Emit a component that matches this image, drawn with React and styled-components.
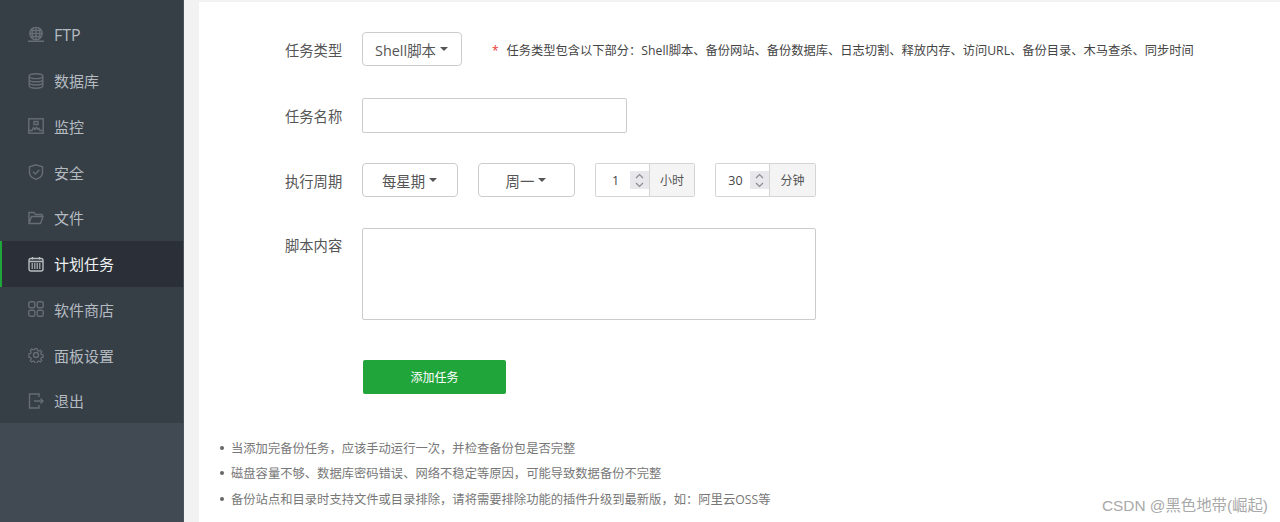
import React from 'react';
import styled, { createGlobalStyle } from 'styled-components';

const cjk = `"Open Sans", "Noto Sans CJK SC", sans-serif`;

const GlobalStyle = createGlobalStyle`
  html, body {
    margin: 0;
    padding: 0;
    height: 100%;
    overflow: hidden;
    background-color: #f2f2f2;
    font-family: ${cjk};
  }
  * {
    box-sizing: border-box;
  }
`;

const Page = styled.div`
  display: flex;
  height: 522px;
  width: 1280px;
  position: relative;
  overflow: hidden;
`;

const Sidebar = styled.nav`
  width: 184px;
  flex-shrink: 0;
  background-color: #414a52;
  border-right: 1px solid #4a535b;
`;

const Menu = styled.ul`
  list-style: none;
  margin: 0;
  padding: 12px 0 0 0;
  height: 423px;
  background-color: #363e46;
`;

const MenuItem = styled.li`
  display: flex;
  align-items: center;
  height: 45.75px;
  padding-left: ${p => (p.$active ? '26px' : '28px')};
  gap: 10px;
  font-size: ${p => (p.$latin ? '16px' : '15px')};
  color: ${p => (p.$active ? '#eef0f2' : '#b4bbc1')};
  background-color: ${p => (p.$active ? '#2b3038' : 'transparent')};
  border-left: ${p => (p.$active ? '2px solid #20a53a' : 'none')};

  svg {
    width: 16px;
    height: 16px;
    flex-shrink: 0;
    fill: none;
    stroke: ${p => (p.$active ? '#b8bcc0' : '#666d74')};
    stroke-width: 1.4;
  }
`;

const Content = styled.main`
  flex: 1;
  margin: 2px 0 0 15px;
  background-color: #fff;
  padding: 30px 0 0 86px;
`;

const Row = styled.div`
  display: flex;
  align-items: ${p => (p.$top ? 'flex-start' : 'center')};
  margin-bottom: ${p => p.$gap || 30}px;
`;

const Label = styled.label`
  width: 77px;
  flex-shrink: 0;
  font-size: 14.3px;
  color: #555;
  line-height: ${p => (p.$top ? '36px' : 'normal')};
`;

const Select = styled.div`
  display: flex;
  align-items: center;
  justify-content: center;
  gap: 4px;
  height: 34px;
  width: ${p => p.$width}px;
  margin-right: ${p => p.$gap || 0}px;
  padding-right: 1px;
  background-color: #fff;
  border: 1px solid #ccc;
  border-radius: 4px;
  font-size: 14.4px;
  color: #555;
`;

const Caret = styled.span`
  width: 0;
  height: 0;
  border-top: 4px solid #555;
  border-left: 4px solid transparent;
  border-right: 4px solid transparent;
`;

const Hint = styled.span`
  margin: 1px 0 0 30px;
  font-size: 12.25px;
  color: #444;
  white-space: nowrap;
`;

const Star = styled.span`
  color: #e33;
  margin-right: 8px;
  font-size: 12px;
`;

const TextInput = styled.input`
  width: 265px;
  height: 35px;
  border: 1px solid #ccc;
  border-radius: 2px;
  background-color: #fff;
  padding: 0;
`;

const Spinner = styled.div`
  display: flex;
  width: ${p => p.$width}px;
  height: 34px;
  margin-right: ${p => p.$gap || 0}px;
  border: 1px solid #d4d4d4;
  border-radius: 2px;
`;

const SpinValue = styled.span`
  width: 33px;
  padding-left: 6px;
  line-height: 34px;
  text-align: center;
  font-size: 12.5px;
  color: #444;
`;

const SpinArrows = styled.span`
  display: flex;
  align-items: center;
  justify-content: center;
  width: 19px;
  height: 18px;
  margin: 7px 0 0 1px;
  background-color: #e8e8ec;

  svg {
    width: 11px;
    height: 15px;
    fill: none;
    stroke: #8a8a8a;
    stroke-width: 1.1;
  }
`;

const Unit = styled.span`
  flex: 1;
  background-color: #f4f4f4;
  border-left: 1px solid #d4d4d4;
  text-align: center;
  font-size: 12px;
  line-height: 34px;
  color: #555;
`;

const TextArea = styled.textarea`
  width: 454px;
  height: 92px;
  border: 1px solid #ccc;
  border-radius: 2px;
  background-color: #fff;
  resize: none;
  padding: 0;
  display: block;
`;

const SubmitButton = styled.button`
  display: block;
  width: 143px;
  height: 34px;
  margin-left: 78px;
  border: none;
  border-radius: 2px;
  background-color: #20a53a;
  color: #fff;
  font-family: inherit;
  font-size: 12px;
  padding: 0;
`;

const Notes = styled.ul`
  list-style: none;
  margin: 41px 0 0 -65px;
  padding: 0;
`;

const Note = styled.li`
  display: flex;
  align-items: center;
  height: 25.5px;
  font-size: 12.3px;
  color: #777;
  white-space: nowrap;

  &::before {
    content: '';
    width: 4px;
    height: 4px;
    border-radius: 50%;
    background-color: #666;
    margin-right: 7px;
    flex-shrink: 0;
  }
`;

const Watermark = styled.div`
  position: absolute;
  right: 12px;
  bottom: 7px;
  font-family: "Liberation Sans", "Noto Sans CJK SC", sans-serif;
  font-size: 15.4px;
  color: #a9a9a9;
`;

const icons = {
  ftp: (
    <svg viewBox="0 0 16 16">
      <circle cx="8" cy="6.500" r="6.200" />
      <path d="M1.800 6.500h12.400M8 0.300v12.400M5.200 1c-1.300 3.200-1.300 7.800 0 11M10.800 1c1.300 3.200 1.300 7.800 0 11M2.800 3.500h10.400M2.800 9.500h10.400M0 14.300h16" />
    </svg>
  ),
  database: (
    <svg viewBox="0 0 16 16">
      <ellipse cx="8" cy="3.200" rx="6.800" ry="2.400" />
      <path d="M1.200 3.200v9.600c0 1.300 3 2.400 6.800 2.400s6.800-1.100 6.800-2.400V3.200M1.200 6.400c0 1.300 3 2.400 6.800 2.400s6.800-1.100 6.800-2.400M1.200 9.600c0 1.300 3 2.400 6.800 2.400s6.800-1.100 6.800-2.400" />
    </svg>
  ),
  monitor: (
    <svg viewBox="0 0 16 16">
      <rect x="0.800" y="0.800" width="14.400" height="14.400" />
      <path d="M1 12.500h3l1.500-3 1.500 2 1.500-2 1.500 2 1-1 1 2h2.500M6 3.500h4v3H6z" />
    </svg>
  ),
  shield: (
    <svg viewBox="0 0 16 16">
      <path d="M8 0.800l6.500 2v6c0 3.200-3 5.400-6.500 6.600C4.500 14.200 1.500 12 1.500 8.800v-6z" />
      <path d="M5 7.800l2.300 2.300 4-4" />
    </svg>
  ),
  folder: (
    <svg viewBox="0 0 16 16">
      <path d="M1 13.500V2.500h5l1.500 2H14v2M1 13.500h11.500l2.500-7H3.500z" />
    </svg>
  ),
  calendar: (
    <svg viewBox="0 0 16 16">
      <rect x="1" y="2.500" width="14" height="12.500" rx="2" />
      <path d="M4.500 1v2.500M11.500 1v2.500M1 5.500h14" />
      <path d="M3.500 8h9M3.500 10h9M3.500 12h9" strokeDasharray="1.500 1" />
    </svg>
  ),
  store: (
    <svg viewBox="0 0 16 16">
      <rect x="0.800" y="0.800" width="6" height="6" rx="1.500" />
      <rect x="9.200" y="0.800" width="6" height="6" rx="1.500" />
      <rect x="0.800" y="9.200" width="6" height="6" rx="1.500" />
      <rect x="9.200" y="9.200" width="6" height="6" rx="1.500" />
    </svg>
  ),
  gear: (
    <svg viewBox="0 0 16 16">
      <circle cx="8" cy="8" r="2.500" />
      <path d="M6.800 1h2.400l.4 2 1.500.7 1.800-1 1.500 1.700-1.100 1.700.6 1.500 2 .4v2.400l-2 .4-.6 1.500 1.100 1.700-1.500 1.700-1.800-1-1.500.7-.4 2H6.800l-.4-2-1.500-.7-1.800 1-1.500-1.700 1.100-1.700-.6-1.500-2-.4V6.600l2-.4.600-1.500-1.100-1.700L3.100 1.300l1.800 1 1.500-.7z" transform="translate(0.800 0.800) scale(0.9)" />
    </svg>
  ),
  logout: (
    <svg viewBox="0 0 16 16">
      <path d="M11 4V1H1.500v14H11v-3M6 8h9M12.500 5.500L15 8l-2.500 2.500" />
    </svg>
  ),
};

const menu = [
  ['ftp', 'FTP'],
  ['database', '数据库'],
  ['monitor', '监控'],
  ['shield', '安全'],
  ['folder', '文件'],
  ['calendar', '计划任务', true],
  ['store', '软件商店'],
  ['gear', '面板设置'],
  ['logout', '退出'],
];

const notes = [
  '当添加完备份任务，应该手动运行一次，并检查备份包是否完整',
  '磁盘容量不够、数据库密码错误、网络不稳定等原因，可能导致数据备份不完整',
  '备份站点和目录时支持文件或目录排除，请将需要排除功能的插件升级到最新版，如：阿里云OSS等',
];

function NumberBox({ value, unit, gap, width }) {
  return (
    <Spinner $gap={gap} $width={width}>
      <SpinValue>{value}</SpinValue>
      <SpinArrows>
        <svg viewBox="0 0 11 15">
          <path d="M2 5l3.500-3.500L9 5M2 10l3.500 3.500L9 10" />
        </svg>
      </SpinArrows>
      <Unit>{unit}</Unit>
    </Spinner>
  );
}

export default function App() {
  return (
    <Page>
      <GlobalStyle />
      <Sidebar>
        <Menu>
          {menu.map(([icon, text, active]) => (
            <MenuItem key={text} $active={active} $latin={text === 'FTP'}>
              {icons[icon]}
              {text}
            </MenuItem>
          ))}
        </Menu>
      </Sidebar>
      <Content>
        <Row $gap={32}>
          <Label>任务类型</Label>
          <Select $width={100}>Shell脚本 <Caret /></Select>
          <Hint><Star>*</Star>任务类型包含以下部分：Shell脚本、备份网站、备份数据库、日志切割、释放内存、访问URL、备份目录、木马查杀、同步时间</Hint>
        </Row>
        <Row>
          <Label>任务名称</Label>
          <TextInput />
        </Row>
        <Row $gap={31}>
          <Label>执行周期</Label>
          <Select $width={96} $gap={20}>每星期 <Caret /></Select>
          <Select $width={97} $gap={20}>周一 <Caret /></Select>
          <NumberBox value="1" unit="小时" gap={20} width={100} />
          <NumberBox value="30" unit="分钟" width={101} />
        </Row>
        <Row $top $gap={40}>
          <Label $top>脚本内容</Label>
          <TextArea />
        </Row>
        <SubmitButton>添加任务</SubmitButton>
        <Notes>
          {notes.map(n => <Note key={n}>{n}</Note>)}
        </Notes>
      </Content>
      <Watermark>CSDN @黑色地带(崛起)</Watermark>
    </Page>
  );
}
